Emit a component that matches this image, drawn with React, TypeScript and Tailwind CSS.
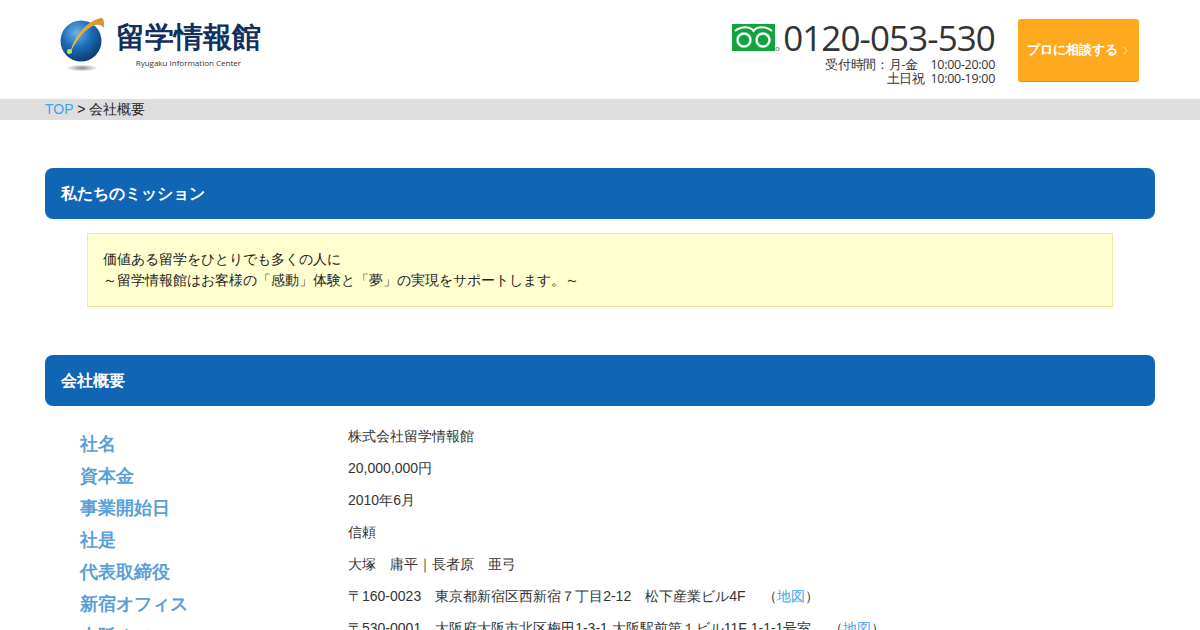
import { ChevronRight } from 'lucide-react'

function Globe() {
  return (
    <svg width="50" height="62" viewBox="0 0 50 62" className="shrink-0">
      <defs>
        <radialGradient id="ball" cx="0.4" cy="0.3" r="0.8">
          <stop offset="0" stopColor="#6fb2e6" />
          <stop offset="0.45" stopColor="#1b6cb8" />
          <stop offset="1" stopColor="#0b2f5e" />
        </radialGradient>
        <radialGradient id="shade">
          <stop offset="0" stopColor="#8a8a8a" />
          <stop offset="1" stopColor="#ffffff" />
        </radialGradient>
        <linearGradient id="arc" x1="0" y1="1" x2="1" y2="0">
          <stop offset="0" stopColor="#f6c34a" />
          <stop offset="1" stopColor="#d9902a" />
        </linearGradient>
      </defs>
      <ellipse cx="22" cy="52" rx="16" ry="3.5" fill="url(#shade)" />
      <circle cx="21" cy="25" r="20.5" fill="url(#ball)" />
      <path d="M10 37 C14 22 26 4 42 2 C42 2 45 4 44 12 C41 8 36 8 31 11 C22 16 15 27 10 37Z" fill="url(#arc)" />
      <circle cx="9.5" cy="35.5" r="2.5" fill="#c6e83c" />
    </svg>
  )
}

function FreeDial() {
  return (
    <svg width="48" height="28" viewBox="0 0 48 28" className="shrink-0">
      <rect x="0" y="0" width="43" height="27" fill="#10a53c" />
      <path d="M3 7 C9 2 18 2 21.5 7 C25 2 34 2 40 7" fill="none" stroke="#fff" strokeWidth="2" />
      <circle cx="12" cy="16" r="6.5" fill="none" stroke="#fff" strokeWidth="2.4" />
      <circle cx="31" cy="16" r="6.5" fill="none" stroke="#fff" strokeWidth="2.4" />
      <circle cx="45.5" cy="25" r="1.7" fill="none" stroke="#444" strokeWidth="0.6" />
    </svg>
  )
}

const rows = [
  { label: '社名', value: '株式会社留学情報館' },
  { label: '資本金', value: '20,000,000円' },
  { label: '事業開始日', value: '2010年6月' },
  { label: '社是', value: '信頼' },
  { label: '代表取締役', value: '大塚　庸平｜長者原　亜弓' },
  { label: '新宿オフィス', value: '〒160-0023　東京都新宿区西新宿７丁目2-12　松下産業ビル4F', map: true },
  { label: '大阪オフィス', value: '〒530-0001　大阪府大阪市北区梅田1-3-1 大阪駅前第１ビル11F 1-1-1号室', map: true },
]

export default function App() {
  return (
    <div className="h-[630px] overflow-hidden bg-white font-[Liberation_Sans,sans-serif] text-[14px] text-[#333]">
      {/* header */}
      <header className="flex h-[99px] pl-[60px] pr-[61px]">
        <div className="flex pt-[16px]">
          <Globe />
          <div className="ml-[6px] flex flex-col items-end">
            <span className="text-[29px] leading-[42px] font-black text-[#12305c]">留学情報館</span>
            <span className="mr-[20px] mt-[-1px] font-['Open_Sans'] text-[8px] leading-[11px] text-[#333]">Ryugaku Information Center</span>
          </div>
        </div>
        <div className="ml-auto flex pt-[19px]">
          <div className="flex flex-col items-end">
            <div className="flex h-[38px] items-center">
              <FreeDial />
              <span className="ml-[3px] font-['Open_Sans'] text-[35px] leading-[38px] tracking-[-0.9px] text-[#333]">0120-053-530</span>
            </div>
            <p className="mt-[1px] text-right font-['Open_Sans'] text-[12.5px] leading-[14px] tracking-[-0.3px] text-[#333]">
              受付時間：月-金　10:00-20:00
              <br />
              土日祝&nbsp;&nbsp;10:00-19:00
            </p>
          </div>
          <a className="ml-[23px] flex h-[62px] w-[121px] items-center justify-between rounded-[3px] bg-[#ffa91f] pl-[9px] pr-[7px] text-[13px] font-bold whitespace-nowrap text-white shadow-[0_1px_0_#e2921a]">
            プロに相談する
            <ChevronRight size={13} strokeWidth={1.5} />
          </a>
        </div>
      </header>

      {/* breadcrumb */}
      <div className="h-[21px] bg-[#dedede] pl-[45px] leading-[21px] text-[#222]">
        <a className="text-[#3ea3ea]">TOP</a> &gt; 会社概要
      </div>

      <main className="px-[45px] pt-[48px]">
        <h2 className="h-[51px] rounded-[8px] bg-[#1066b5] pl-[16px] text-[16px] leading-[51px] font-bold text-white">私たちのミッション</h2>
        <div className="mx-[42px] mt-[14px] h-[74px] border border-[#f2e79a] bg-[#ffffcf] px-[15px] py-[15px] leading-[21px] text-[#222]">
          価値ある留学をひとりでも多くの人に
          <br />
          ～留学情報館はお客様の「感動」体験と「夢」の実現をサポートします。～
        </div>

        <h2 className="mt-[48px] h-[51px] rounded-[8px] bg-[#1066b5] pl-[16px] text-[16px] leading-[51px] font-bold text-white">会社概要</h2>
        <dl className="mt-[14px] pl-[35px]">
          {rows.map((r) => (
            <div key={r.label} className="flex h-[32px]">
              <dt className="w-[268px] pt-[8px] text-[18px] leading-[32px] font-bold text-[#5b9fd6]">{r.label}</dt>
              <dd className="leading-[32px]">
                {r.value}
                {r.map && (
                  <>
                    {' '}　（<a className="text-[#3ea3ea]">地図</a>）
                  </>
                )}
              </dd>
            </div>
          ))}
        </dl>
      </main>
    </div>
  )
}
